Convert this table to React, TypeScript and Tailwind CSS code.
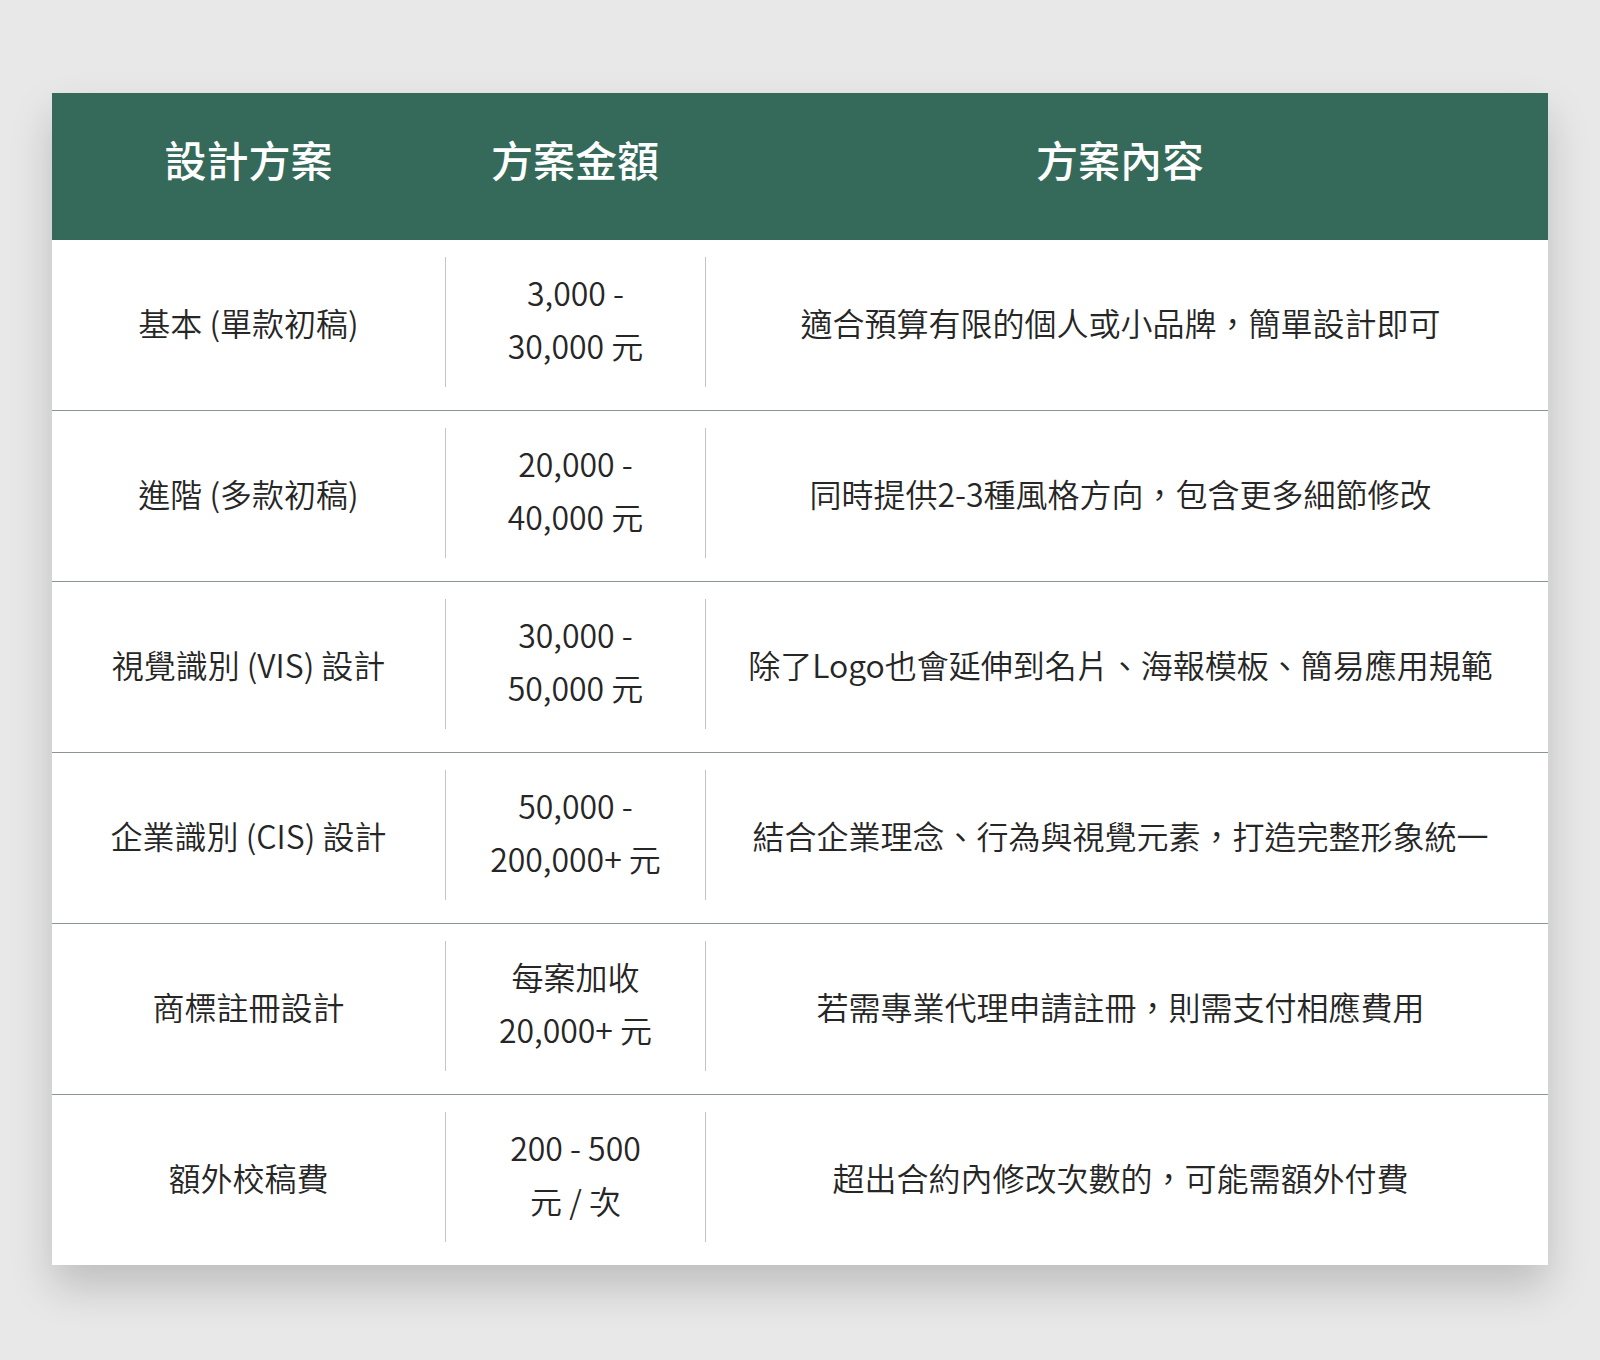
import React from "react";

const rows: { plan: string; price: string[]; desc: string }[] = [
  { plan: "基本 (單款初稿)", price: ["3,000 -", "30,000 元"], desc: "適合預算有限的個人或小品牌，簡單設計即可" },
  { plan: "進階 (多款初稿)", price: ["20,000 -", "40,000 元"], desc: "同時提供2-3種風格方向，包含更多細節修改" },
  { plan: "視覺識別 (VIS) 設計", price: ["30,000 -", "50,000 元"], desc: "除了Logo也會延伸到名片、海報模板、簡易應用規範" },
  { plan: "企業識別 (CIS) 設計", price: ["50,000 -", "200,000+ 元"], desc: "結合企業理念、行為與視覺元素，打造完整形象統一" },
  { plan: "商標註冊設計", price: ["每案加收", "20,000+ 元"], desc: "若需專業代理申請註冊，則需支付相應費用" },
  { plan: "額外校稿費", price: ["200 - 500", "元 / 次"], desc: "超出合約內修改次數的，可能需額外付費" },
];

export default function App() {
  return (
    <div
      lang="zh-Hant"
      className="min-h-[1360px] w-full bg-[#e8e8e8] pt-[93px]"
      style={{ fontFamily: '"Noto Sans CJK TC", "Noto Sans", sans-serif' }}
    >
      <div className="mx-auto w-[1496px] bg-white shadow-[0_22px_40px_rgba(0,0,0,0.18)]">
        <div className="flex h-[147px] items-center bg-[#356a5b] pb-[16px] text-[42px] font-medium text-white">
          <div className="w-[393px] text-center">設計方案</div>
          <div className="w-[260px] text-center">方案金額</div>
          <div className="flex-1 pr-[13px] text-center">方案內容</div>
        </div>
        {rows.map((r, i) => (
          <div
            key={i}
            className={
              "flex pt-[17px] pb-[23px] text-[32px] font-[350] text-[#262626] " +
              (i < rows.length - 1 ? "border-b border-[#8b9591]" : "")
            }
          >
            <div className="flex h-[130px] w-[393px] items-center justify-center">{r.plan}</div>
            <div className="flex h-[130px] w-[260px] flex-col items-center justify-center border-l border-[#c4c4c4] pb-[6px] leading-[53px]">
              <div>{r.price[0]}</div>
              <div>{r.price[1]}</div>
            </div>
            <div className="flex h-[130px] flex-1 items-center justify-center border-l border-[#c4c4c4] pr-[13px]">
              {r.desc}
            </div>
          </div>
        ))}
      </div>
    </div>
  );
}
